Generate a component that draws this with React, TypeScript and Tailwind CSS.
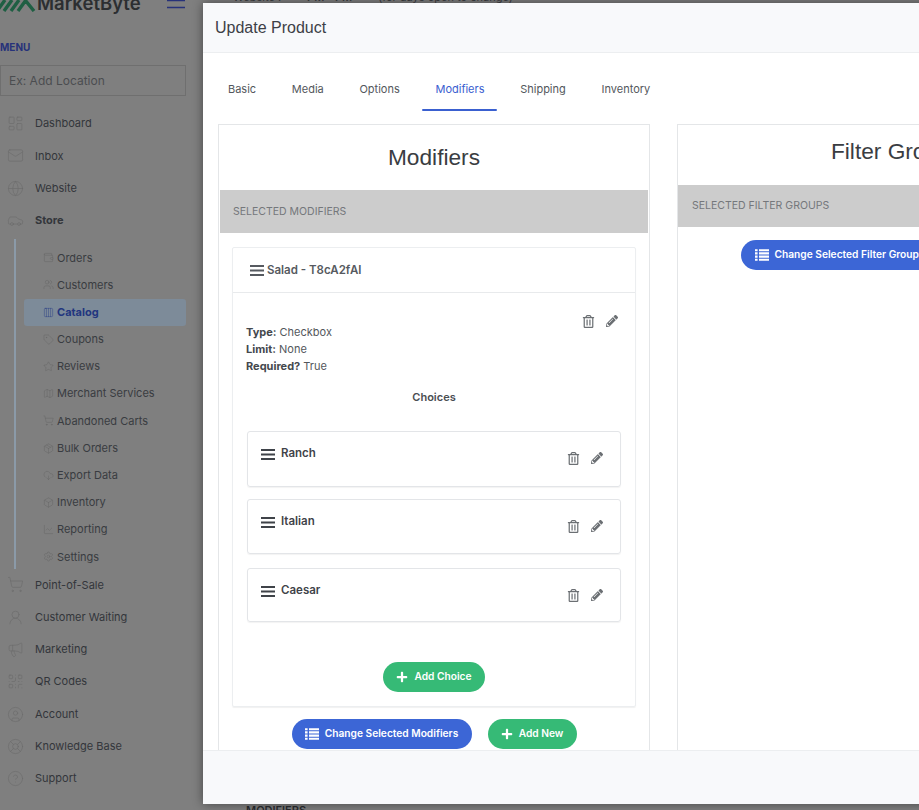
import React from "react";
import {
  LayoutDashboard,
  Mail,
  Globe,
  Car,
  Wallet,
  Users,
  Columns4,
  Tag,
  Star,
  Map,
  ShoppingCart,
  Package,
  CloudDownload,
  Box,
  ChartLine,
  Settings,
  UserRound,
  Megaphone,
  QrCode,
  CircleUser,
  LifeBuoy,
  CircleHelp,
  type LucideIcon,
} from "lucide-react";
import { FaPencilAlt, FaPlus, FaRegTrashAlt } from "react-icons/fa";

const font = { fontFamily: '"Inter", "Liberation Sans", sans-serif' };
const headingFont = { fontFamily: '"Liberation Sans", sans-serif' };

const storeItems: { label: string; icon: LucideIcon; active?: boolean }[] = [
  { label: "Orders", icon: Wallet },
  { label: "Customers", icon: Users },
  { label: "Catalog", icon: Columns4, active: true },
  { label: "Coupons", icon: Tag },
  { label: "Reviews", icon: Star },
  { label: "Merchant Services", icon: Map },
  { label: "Abandoned Carts", icon: ShoppingCart },
  { label: "Bulk Orders", icon: Package },
  { label: "Export Data", icon: CloudDownload },
  { label: "Inventory", icon: Box },
  { label: "Reporting", icon: ChartLine },
  { label: "Settings", icon: Settings },
];

const lowerItems: { label: string; icon: LucideIcon }[] = [
  { label: "Point-of-Sale", icon: ShoppingCart },
  { label: "Customer Waiting", icon: UserRound },
  { label: "Marketing", icon: Megaphone },
  { label: "QR Codes", icon: QrCode },
  { label: "Account", icon: CircleUser },
  { label: "Knowledge Base", icon: LifeBuoy },
  { label: "Support", icon: CircleHelp },
];

const tabs = ["Basic", "Media", "Options", "Modifiers", "Shipping", "Inventory"];

// Drag handle, three heavy bars
const Handle = () => (
  <svg width="14" height="11" viewBox="0 0 14 11" className="shrink-0">
    <path d="M0 1H14M0 5.5H14M0 10H14" stroke="currentColor" strokeWidth="2" />
  </svg>
);

// Solid list icon used on the blue buttons
const ListIcon = () => (
  <svg width="14" height="12" viewBox="0 0 14 12" className="shrink-0">
    <path d="M0 1.2H2.6M4 1.2H14M0 4.4H2.6M4 4.4H14M0 7.6H2.6M4 7.6H14M0 10.8H2.6M4 10.8H14" stroke="currentColor" strokeWidth="2.1" />
  </svg>
);

// Top level sidebar row
const NavRow = ({ label, icon: Icon, bold = false }: { label: string; icon: LucideIcon; bold?: boolean }) => (
  <div className="flex h-[32.3px] items-center pl-[7px]">
    <Icon size={17} strokeWidth={1} className="text-[#6d6d6d]" />
    <span className={`ml-[11px] text-[11px] text-[#33363b] ${bold ? "font-bold" : "font-normal"}`}>{label}</span>
  </div>
);

const RowActions = ({ className }: { className: string }) => (
  <div className={`flex h-[14px] items-center gap-[11px] text-[#6b6f73] ${className}`}>
    <FaRegTrashAlt size={13} />
    <FaPencilAlt size={12} />
  </div>
);

// Choice row inside the modifier card
const ChoiceCard = ({ name, height }: { name: string; height: string }) => (
  <div className={`flex justify-between rounded-[3px] border border-[#e3e5e8] pl-[13px] pr-[17px] pt-[14px] shadow-[0_1px_1px_rgba(0,0,0,0.05)] ${height}`}>
    <div className="flex h-[16px] items-center text-[#3f4349]">
      <Handle />
      <span className="ml-[6px] text-[11.5px] font-semibold">{name}</span>
    </div>
    <RowActions className="mt-[5px]" />
  </div>
);

const PillButton = ({ label, color, list, width }: { label: string; color: string; list?: boolean; width: string }) => (
  <div className={`flex h-[30px] items-center justify-center rounded-full text-[10.2px] font-semibold text-white ${color} ${width}`}>
    {list ? <ListIcon /> : <FaPlus size={12} />}
    <span className="ml-[6px] whitespace-nowrap">{label}</span>
  </div>
);

export default function App() {
  return (
    <div className="relative flex h-[810px] w-[919px] overflow-hidden bg-[#7f7f7f]" style={font}>
      {/* Sidebar behind the backdrop */}
      <aside className="w-[203px] shrink-0">
        <div className="flex h-[28px] items-start justify-between overflow-hidden pr-[18px]">
          <div className="flex items-start">
            <svg width="36" height="12" viewBox="0 0 36 12" className="shrink-0 text-[#1f5f43]">
              <path d="M-3 11 L5 0 M4 11 L12 0 M11 11 L19 0 M18 11 L26 0 M25 0 L34 11" stroke="currentColor" strokeWidth="3.4" fill="none" />
            </svg>
            <span className="-mt-[9px] ml-[1px] text-[18.5px] font-semibold leading-[24px] text-[#2c2e31]">MarketByte</span>
          </div>
          <svg width="18" height="9" viewBox="0 0 18 9" className="text-[#27327a]">
            <path d="M0 0.5H18M0 7.5H18" stroke="currentColor" strokeWidth="1.6" />
          </svg>
        </div>
        <div className="mt-[12px] text-[10px] font-bold leading-[14px] text-[#27327a]">MENU</div>
        <div className="mt-[11px] flex h-[31px] w-[186px] items-center border border-[#6f6f6f] pl-[8px] text-[12px] text-[#4b4d50]">
          Ex: Add Location
        </div>
        <nav className="mt-[11.5px]">
          <NavRow label="Dashboard" icon={LayoutDashboard} />
          <NavRow label="Inbox" icon={Mail} />
          <NavRow label="Website" icon={Globe} />
          <NavRow label="Store" icon={Car} bold />
          <div className="ml-[14px] mt-[2.5px] h-[329.5px] border-l-[2px] border-[#8b9aa8] pt-[5px]">
            {storeItems.map((item) => (
              <div
                key={item.label}
                className={`ml-[8px] flex h-[27.2px] w-[162px] items-center rounded-[3px] pl-[19px] text-[11px] ${
                  item.active ? "bg-[#7d8b99] font-bold text-[#22367f]" : "text-[#393c41]"
                }`}
              >
                <item.icon size={11} strokeWidth={1} className={item.active ? "text-[#2c3f86]" : "text-[#666666]"} />
                <span className="ml-[3px] whitespace-nowrap">{item.label}</span>
              </div>
            ))}
          </div>
          {lowerItems.map((item) => (
            <NavRow key={item.label} label={item.label} icon={item.icon} />
          ))}
        </nav>
      </aside>

      {/* Page text peeking out around the modal */}
      <div className="absolute left-[233px] top-[-9px] flex gap-[26px] text-[11px] leading-[12px] text-[#3a3c3f]">
        <span>Website :</span>
        <span className="font-semibold">PM - PM</span>
        <span>(for days open to change)</span>
      </div>
      <div className="absolute left-[246px] top-[803px] text-[11px] font-semibold leading-[14px] text-[#2b2d30]">MODIFIERS</div>

      {/* Update Product modal */}
      <div className="absolute left-[203px] top-[3px] z-10 flex h-[801px] w-[900px] flex-col bg-white shadow-[0_0_10px_rgba(0,0,0,0.45)]">
        <header className="flex h-[50px] shrink-0 items-center border-b border-[#eceef0] bg-[#f8f9fb] pl-[12px] pt-[1px] text-[16px] text-[#3d4046]" style={headingFont}>
          Update Product
        </header>
        <div className="min-h-0 flex-1 overflow-hidden pl-[15px]">
          <div className="ml-[-3px] mt-[21px] flex h-[37px] gap-[9.7px]">
            {tabs.map((tab) => (
              <div key={tab} className="flex h-[37px] flex-col justify-between pt-[7px] text-[11px] leading-[16px]">
                <span className={`px-[13px] ${tab === "Modifiers" ? "text-[#3a60d0]" : "text-[#53575c]"}`}>{tab}</span>
                {tab === "Modifiers" && <div className="h-[2.5px] rounded-full bg-[#3a60d0]" />}
              </div>
            ))}
          </div>
          <div className="mt-[13px] flex items-start gap-[27px]">
            {/* Modifiers card */}
            <section className="h-[640px] w-[432px] shrink-0 border border-[#e4e6e8] px-[1px]">
              <h2 className="mt-[18px] text-center text-[22.7px] leading-[28px] text-[#3a3d42]" style={headingFont}>
                Modifiers
              </h2>
              <div className="mt-[19px] flex h-[43px] items-center bg-[#cccccc] pl-[13px] text-[10.5px] text-[#74777b]">
                SELECTED MODIFIERS
              </div>
              <div className="mx-[12px] mt-[14px] h-[460px] rounded-[2px] border border-[#eceef0] shadow-[0_1px_1px_rgba(0,0,0,0.06)]">
                <div className="flex h-[45px] items-center border-b border-[#e8eaec] pl-[17px] text-[#565a60]">
                  <Handle />
                  <span className="ml-[3px] pt-[1px] text-[11.5px] font-semibold">Salad - T8cA2fAI</span>
                </div>
                <div className="px-[14px]">
                  <div className="flex justify-between pr-[3px]">
                    <div className="-ml-[1px] mt-[31px] text-[11px] leading-[17px] text-[#53575c]">
                      <div><b className="text-[#44484d]">Type:</b> Checkbox</div>
                      <div><b className="text-[#44484d]">Limit:</b> None</div>
                      <div><b className="text-[#44484d]">Required?</b> True</div>
                    </div>
                    <RowActions className="mt-[21px]" />
                  </div>
                  <div className="mt-[14px] text-center text-[11px] font-semibold leading-[17px] text-[#4a4d52]">Choices</div>
                  <div className="mt-[25px] flex flex-col gap-[12px]">
                    <ChoiceCard name="Ranch" height="h-[56px]" />
                    <ChoiceCard name="Italian" height="h-[55px]" />
                    <div className="mt-[2px]">
                      <ChoiceCard name="Caesar" height="h-[54px]" />
                    </div>
                  </div>
                  <div className="mt-[40px] flex justify-center">
                    <PillButton label="Add Choice" color="bg-[#36ba76]" width="w-[102px]" />
                  </div>
                </div>
              </div>
              <div className="mt-[12px] flex justify-center gap-[16px]">
                <PillButton label="Change Selected Modifiers" color="bg-[#3c66d6]" list width="w-[180px]" />
                <PillButton label="Add New" color="bg-[#36ba76]" width="w-[89px]" />
              </div>
            </section>

            {/* Filter groups card */}
            <section className="h-[640px] w-[439px] shrink-0 border border-[#e4e6e8]">
              <h2 className="mt-[12px] text-center text-[22.7px] leading-[28px] text-[#3a3d42]" style={headingFont}>
                Filter Groups
              </h2>
              <div className="mt-[20px] flex h-[42px] items-center bg-[#cccccc] pl-[14px] text-[10.5px] text-[#74777b]">
                SELECTED FILTER GROUPS
              </div>
              <div className="ml-[63px] mt-[13px]">
                <PillButton label="Change Selected Filter Groups" color="bg-[#3c66d6]" list width="w-[197px]" />
              </div>
            </section>
          </div>
        </div>
        <footer className="h-[54px] shrink-0 border-t border-[#eceef0] bg-[#f8f9fb]" />
      </div>
    </div>
  );
}
